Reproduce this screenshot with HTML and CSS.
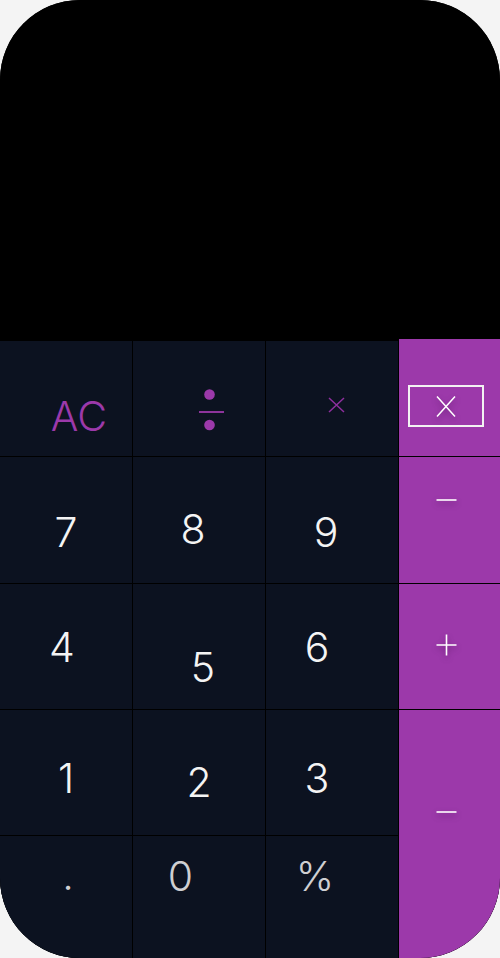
FILE: index.html
```html
<!DOCTYPE html>
<html lang="en">
<head>
<meta charset="utf-8">
<title>Calculator</title>
<link rel="stylesheet" href="styles.css">
</head>
<body>
<div class="calc">
  <div class="display"></div>
  <div class="keys">
    <div class="key key-fn k-ac">AC</div>
    <div class="key k-div">
      <svg width="26" height="42" viewBox="0 0 26 42"><circle cx="10.5" cy="5.5" r="5.3" fill="#9c39aa"/><line x1="0" y1="23" x2="25" y2="23" stroke="#9c39aa" stroke-width="1.8"/><circle cx="10.5" cy="36" r="5.3" fill="#9c39aa"/></svg>
    </div>
    <div class="key k-mul">
      <svg width="17" height="16" viewBox="0 0 17 16"><path d="M1 1 L16 15 M16 1 L1 15" stroke="#8e2f9e" stroke-width="1.5" fill="none"/></svg>
    </div>
    <div class="key key-op k-back">
      <div class="back-box">
        <svg class="shadowed" width="20" height="23" viewBox="0 0 20 23"><path d="M1 1.5 L19 21.5 M19 1.5 L1 21.5" stroke="#fff" stroke-width="1.5" fill="none"/></svg>
      </div>
    </div>

    <div class="key k-7">7</div>
    <div class="key k-8">8</div>
    <div class="key k-9">9</div>
    <div class="key key-op k-minus" aria-label="minus">
      <svg class="shadowed" width="21" height="4" viewBox="0 0 21 4"><line x1="0.5" y1="2" x2="20.5" y2="2" stroke="#fff" stroke-width="1.6"/></svg>
    </div>

    <div class="key k-4">4</div>
    <div class="key k-5">5</div>
    <div class="key k-6">6</div>
    <div class="key key-op k-plus" aria-label="plus">
      <svg class="shadowed" width="21" height="22" viewBox="0 0 21 22"><path d="M0.5 11 L20.5 11 M10.5 0.5 L10.5 21.5" stroke="#fff" stroke-width="1.6" fill="none"/></svg>
    </div>

    <div class="key k-1">1</div>
    <div class="key k-2">2</div>
    <div class="key k-3">3</div>
    <div class="key key-op k-eq" aria-label="equals">
      <svg class="shadowed" width="21" height="4" viewBox="0 0 21 4"><line x1="0.5" y1="2" x2="20.5" y2="2" stroke="#fff" stroke-width="1.6"/></svg>
    </div>

    <div class="key key-dim k-dot">.</div>
    <div class="key key-dim k-0">0</div>
    <div class="key key-dim k-pct">%</div>
  </div>
</div>
</body>
</html>
```
FILE: styles.css
```css
* { box-sizing: border-box; }
html, body { margin: 0; padding: 0; }
body {
  background: #f4f4f4;
  font-family: Inter, "Open Sans", sans-serif;
}
.calc {
  width: 500px;
  height: 958px;
  border-radius: 80px;
  overflow: hidden;
  background: #000;
  display: flex;
  flex-direction: column;
}
.display {
  height: 340px;
  flex: none;
  background: #000;
}
.keys {
  flex: 1;
  display: grid;
  grid-template-columns: 132px 132px 132px 101px;
  grid-template-rows: 115px 126px 125px 125px 122px;
  gap: 1px;
  padding-top: 1px;
  background: #000;
}
.key {
  background: #0c1220;
  color: #f4f4f4;
  display: flex;
  align-items: center;
  justify-content: center;
  font-size: 41px;
  font-weight: 300;
  line-height: 1;
}
.key-fn { color: #9c39aa; }
.key-dim { color: #cfcfd2; }
.key-op {
  background: #9c39aa;
  color: #fff;
}
.back-box {
  width: 76px;
  height: 42px;
  border: 2px solid #f2f2f2;
  display: flex;
  align-items: center;
  justify-content: center;
}
.shadowed { filter: drop-shadow(0 3px 3px rgba(40, 0, 50, 0.4)); overflow: visible; }

.k-ac { padding: 35px 0 0 26px; }
.k-div { padding: 22px 0 0 25px; }
.k-mul { padding: 13px 0 0 8px; }
.k-back { margin-top: -2px; padding: 17px 7px 0 0; }
.k-7 { padding-top: 25px; }
.k-8 { padding: 19px 12px 0 0; }
.k-9 { padding: 24px 12px 0 0; }
.k-minus { padding: 0 7px 40px 0; }
.k-4 { padding: 1px 8px 0 0; }
.k-5 { padding: 41px 0 0 8px; }
.k-6 { padding: 1px 30px 0 0; }
.k-plus { padding: 0 7px 3px 0; }
.k-1 { padding-top: 11px; }
.k-2 { padding-top: 19px; }
.k-3 { padding: 11px 30px 0 0; }
.k-eq { grid-row: span 2; grid-column: 4; padding: 0 7px 44px 0; }
.k-dot { padding: 0 0 43px 4px; }
.k-0 { padding: 0 37px 42px 0; }
.k-pct { padding: 0 34px 42px 0; }
```
